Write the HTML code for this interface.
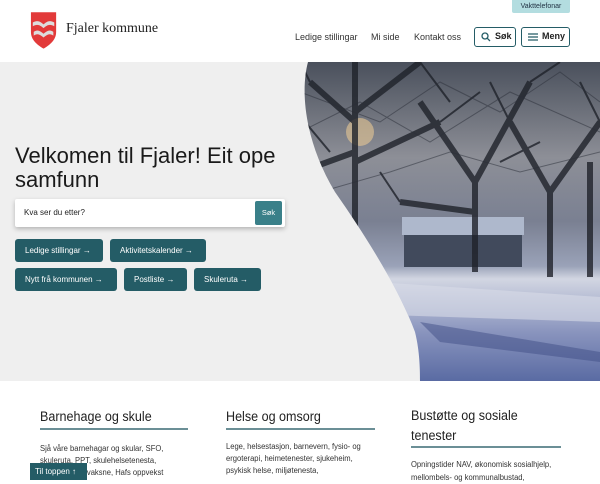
<!DOCTYPE html>
<html><head><meta charset="utf-8"><style>
*{box-sizing:border-box;margin:0;padding:0}
body{width:600px;height:480px;overflow:hidden;background:#fff;font-family:"Liberation Sans",sans-serif;color:#222;position:relative}
.a{position:absolute}
.nav{font-size:9px;color:#333;top:32px}
.btn{background:#245c66;color:#fff;font-size:8px;border-radius:3px;height:23px;line-height:23px;padding:0 10px;white-space:nowrap}
h2{font-weight:normal;font-size:13.5px;color:#222;line-height:22px;white-space:nowrap;transform:scaleX(.93);transform-origin:0 0}
.ln{height:2px;background:#6b8f96}
.p{font-size:8px;line-height:12px;color:#333;white-space:nowrap;transform:scaleX(.95);transform-origin:0 0}
</style></head><body>
<svg class="a" style="left:30px;top:10px" width="28" height="40" viewBox="0 0 30 40">
<path d="M1 1H28V22C28 31 21 36 14.5 40C8 36 1 31 1 22Z" fill="#e23a3a"/>
<path d="M3 12C8 9 11 11 14.5 14C18 11 21 9 26 12V16C21 13 18 15 14.5 18C11 15 8 13 3 16Z" fill="#ddd"/>
<path d="M4 22C8 19 11 21 14.5 24C18 21 21 19 25 22V26C21 23 18 25 14.5 28C11 25 8 23 4 26Z" fill="#ddd"/>
</svg>
<div class="a" style="left:66px;top:21px;font-family:'Liberation Serif',serif;font-size:14px;color:#222">Fjaler kommune</div>
<div class="a" style="left:512px;top:0;width:58px;height:13px;background:#b3dde0;font-size:7px;line-height:13px;text-align:center;border-radius:0 0 2px 2px;color:#234">Vakttelefonar</div>
<div class="a nav" style="left:295px">Ledige stillingar</div>
<div class="a nav" style="left:371px">Mi side</div>
<div class="a nav" style="left:414px">Kontakt oss</div>
<div class="a" style="left:474px;top:27px;width:42px;height:20px;border:1.5px solid #245c66;border-radius:3px;font-size:9px;font-weight:bold;line-height:17px;padding-left:20px;color:#222">Søk
<svg class="a" style="left:6px;top:4px" width="10" height="10" viewBox="0 0 10 10"><circle cx="4" cy="4" r="3" fill="none" stroke="#245c66" stroke-width="1.3"/><path d="M6.2 6.2L9 9" stroke="#245c66" stroke-width="1.3"/></svg></div>
<div class="a" style="left:521px;top:27px;width:49px;height:20px;border:1.5px solid #245c66;border-radius:3px;font-size:9px;font-weight:bold;line-height:17px;padding-left:20px;color:#222">Meny
<svg class="a" style="left:6px;top:5px" width="10" height="8"><path d="M0 1H10M0 4H10M0 7H10" stroke="#245c66" stroke-width="1.2"/></svg></div>
<div class="a" style="left:0;top:62px;width:600px;height:319px;background:#efefef"></div>
<svg class="a" style="left:300px;top:62px" width="300" height="319" viewBox="0 0 300 319">
<defs>
<clipPath id="c"><path d="M8 0C0 30 5 80 35 130C70 180 100 230 115 270C120 290 120 310 120 319H300V0Z"/></clipPath>
<linearGradient id="sky" x1="0" y1="0" x2="0" y2="1"><stop offset="0" stop-color="#4a505c"/><stop offset=".3" stop-color="#8d8f97"/><stop offset=".5" stop-color="#7a8092"/><stop offset=".64" stop-color="#9aa2b8"/><stop offset=".68" stop-color="#d2d6e2"/><stop offset=".85" stop-color="#8893bd"/><stop offset="1" stop-color="#5a6ba3"/></linearGradient>
</defs>
<g clip-path="url(#c)">
<rect width="300" height="319" fill="url(#sky)"/>
<circle cx="60" cy="70" r="14" fill="#e8c895" opacity=".6"/>
<rect x="102" y="155" width="122" height="18" fill="#aeb8cc"/>
<rect x="104" y="173" width="118" height="32" fill="#414a5c"/>
<path d="M0 215L300 235V260L0 250Z" fill="#d8dce8" opacity=".6"/>
<path d="M120 260L300 290V300L140 280Z" fill="#3f4e85" opacity=".5"/>
<g stroke="#1f222a" fill="none" opacity=".8">
<path d="M55 0V175M55 60L10 20M55 90L0 110M55 50L120 0M55 100L140 60M175 210V120L120 40M175 120L230 20M175 150L100 140M250 215V130L210 60M250 130L300 60M290 215V100" stroke-width="6"/>
<path d="M10 20L0 0M120 0L150 40M100 140L80 110M140 60L180 30M230 20L260 0M210 60L190 20M300 60L280 20M30 90L5 60M200 100L240 80" stroke-width="2"/>
</g>
<g stroke="#2a2e38" stroke-width="1" fill="none" opacity=".5">
<path d="M0 30L80 60L140 20L200 50L260 10L300 40M20 130L90 110L150 90L220 110L300 90M0 70L60 40L130 80L210 30L300 70"/>
</g>
</g></svg>
<div class="a" style="left:15px;top:144px;font-size:22px;line-height:24px;color:#1a1a1a;width:290px">Velkomen til Fjaler! Eit ope samfunn</div>
<div class="a" style="left:15px;top:199px;width:270px;height:28px;background:#fff;box-shadow:0 2px 5px rgba(0,0,0,.25);border-radius:2px;font-size:8px;line-height:28px;padding-left:9px">Kva ser du etter?</div>
<div class="a" style="left:255px;top:201px;width:27px;height:24px;background:#3a8089;color:#fff;font-size:7.5px;line-height:24px;text-align:center;border-radius:2px">Søk</div>
<div class="a btn" style="left:15px;top:239px;width:88px">Ledige stillingar →</div>
<div class="a btn" style="left:110px;top:239px;width:96px">Aktivitetskalender →</div>
<div class="a btn" style="left:15px;top:268px;width:102px">Nytt frå kommunen →</div>
<div class="a btn" style="left:124px;top:268px;width:63px">Postliste →</div>
<div class="a btn" style="left:194px;top:268px;width:67px">Skuleruta →</div>
<h2 class="a" style="left:40px;top:406px">Barnehage og skule</h2>
<div class="a ln" style="left:40px;top:428px;width:148px"></div>
<div class="a p" style="left:40px;top:443px">Sjå våre barnehagar og skular, SFO,<br>skuleruta, PPT, skulehelsetenesta,<br>opplæring for vaksne, Hafs oppvekst</div>
<h2 class="a" style="left:226px;top:406px">Helse og omsorg</h2>
<div class="a ln" style="left:226px;top:428px;width:149px"></div>
<div class="a p" style="left:226px;top:441px">Lege, helsestasjon, barnevern, fysio- og<br>ergoterapi, heimetenester, sjukeheim,<br>psykisk helse, miljøtenesta,</div>
<h2 class="a" style="left:411px;top:406px;line-height:20px">Bustøtte og sosiale<br>tenester</h2>
<div class="a ln" style="left:411px;top:446px;width:150px"></div>
<div class="a p" style="left:411px;top:459px;line-height:12.5px">Opningstider NAV, økonomisk sosialhjelp,<br>mellombels- og kommunalbustad,</div>
<div class="a" style="left:30px;top:463px;width:57px;height:17px;background:#245c66;color:#fff;font-size:8px;line-height:17px;padding-left:5px;white-space:nowrap">Til toppen ↑</div>
</body></html>
